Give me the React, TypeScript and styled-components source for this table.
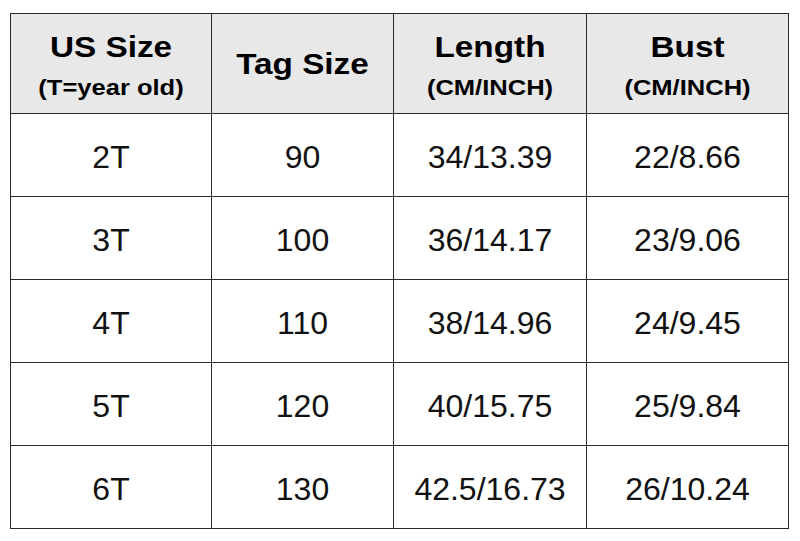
import React from "react";
import styled, { createGlobalStyle } from "styled-components";

const Global = createGlobalStyle`
  html, body { margin: 0; padding: 0; background: #ffffff; }
  body { font-family: "Liberation Sans", Arial, sans-serif; }
`;

const Page = styled.div`
  width: 800px;
  height: 541px;
  padding: 13px 0 0 10px;
  box-sizing: border-box;
  background: #ffffff;
`;

const Table = styled.table`
  border-collapse: collapse;
  table-layout: fixed;
  width: 778px;
  font-family: "Liberation Sans", Arial, sans-serif;
  color: #111;
`;

const HeadRow = styled.tr`
  height: 100px;
  background: #e8e8e8;
`;

const BodyRow = styled.tr`
  height: 83px;
`;

const HeadCell = styled.th`
  border: 1.5px solid #2a2a2a;
  padding: 0;
  text-align: center;
  vertical-align: middle;
  font-weight: 700;
  color: #000;
`;

const Title = styled.div<{ $lh?: number }>`
  font-size: 30px;
  line-height: ${(p) => p.$lh ?? 48}px;
  transform: scaleX(1.11);
`;

const Sub = styled.div`
  font-size: 22px;
  line-height: 33px;
  transform: scaleX(1.16);
`;

const Cell = styled.td`
  border: 1.5px solid #2a2a2a;
  padding: 4px 0 0 0;
  text-align: center;
  vertical-align: middle;
  font-size: 32px;
  color: #111;
`;

const rows = [
  ["2T", "90", "34/13.39", "22/8.66"],
  ["3T", "100", "36/14.17", "23/9.06"],
  ["4T", "110", "38/14.96", "24/9.45"],
  ["5T", "120", "40/15.75", "25/9.84"],
  ["6T", "130", "42.5/16.73", "26/10.24"],
];

export default function App() {
  return (
    <>
      <Global />
      <Page>
        <Table>
          <colgroup>
            <col style={{ width: 201 }} />
            <col style={{ width: 182 }} />
            <col style={{ width: 193 }} />
            <col style={{ width: 202 }} />
          </colgroup>
          <thead>
            <HeadRow>
              <HeadCell>
                <Title>US Size</Title>
                <Sub>(T=year old)</Sub>
              </HeadCell>
              <HeadCell>
                <Title $lh={36}>Tag Size</Title>
              </HeadCell>
              <HeadCell>
                <Title>Length</Title>
                <Sub>(CM/INCH)</Sub>
              </HeadCell>
              <HeadCell>
                <Title>Bust</Title>
                <Sub>(CM/INCH)</Sub>
              </HeadCell>
            </HeadRow>
          </thead>
          <tbody>
            {rows.map((r) => (
              <BodyRow key={r[0]}>
                {r.map((v, i) => (
                  <Cell key={i}>{v}</Cell>
                ))}
              </BodyRow>
            ))}
          </tbody>
        </Table>
      </Page>
    </>
  );
}
